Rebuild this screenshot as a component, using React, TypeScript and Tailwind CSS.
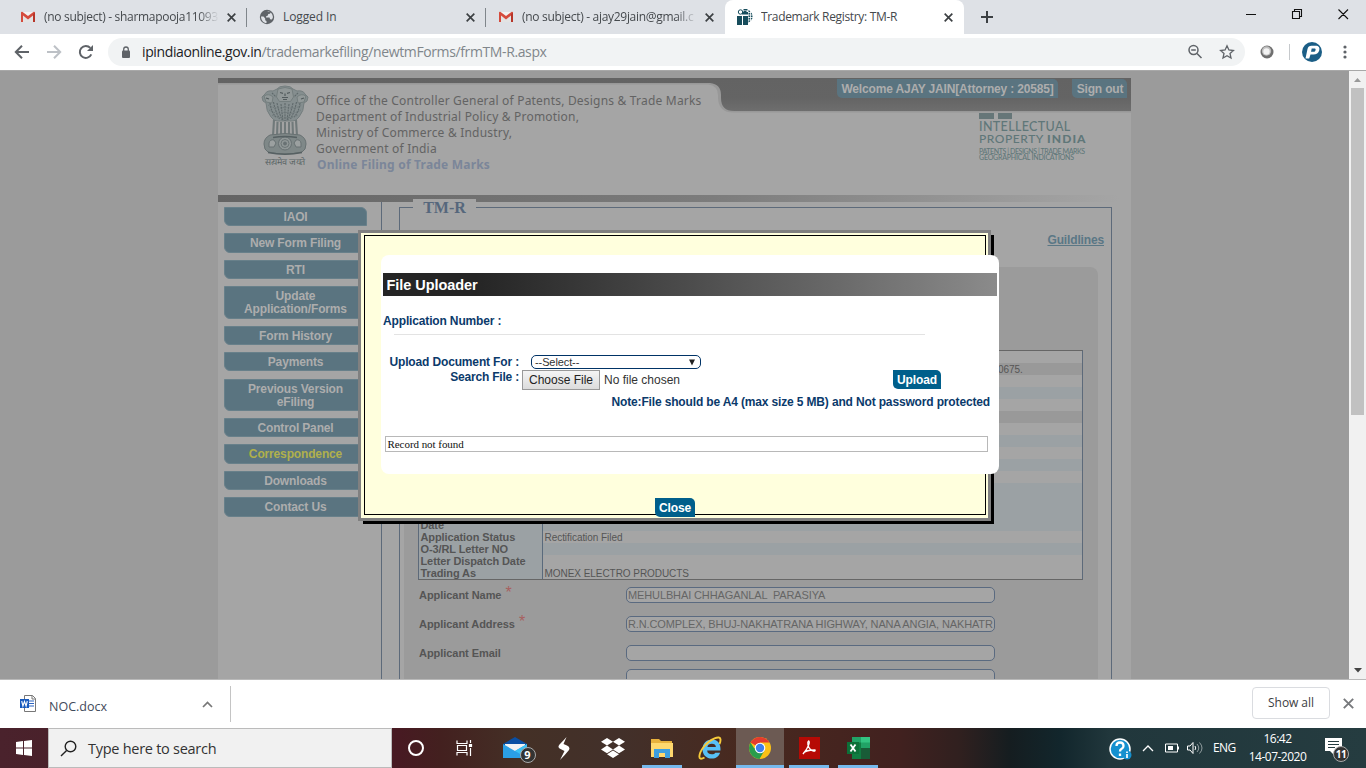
import React from "react";

const ui = "font-['Open_Sans','Noto_Sans',sans-serif]";
const arial = "font-['Liberation_Sans',Arial,sans-serif]";

function GmailIcon() {
  return (
    <svg width="16" height="16" viewBox="0 0 16 16">
      <path d="M1 3h14v10H1z" fill="#f2f2f2" />
      <path d="M3 13V6l5 4 5-4v7z" fill="#e3e3e3" />
      <path d="M1 3.4V13h2V6.500l5 4 5-4V13h2V3.400c0-.8-1-1-1.600-.5L8 7 2.600 2.900C2 2.400 1 2.600 1 3.400z" fill="#d54b3d" />
      <path d="M13 6.500V13h2V3.400L13 5z" fill="#b63529" />
    </svg>
  );
}

function GlobeIcon() {
  return (
    <svg width="16" height="16" viewBox="0 0 16 16">
      <circle cx="8" cy="8" r="7.200" fill="#5f6368" />
      <path d="M8.500 2.200c1.200 0 2.200.5 3 1.200l-.5 1.300-1.800.3-.3 1.500-1.700.7-.2 1.300h3.500l.6 1.800 1.700.2c.8-.9 1.100-1.700 1.100-2.700-.3-3.200-2.200-5.200-5.400-5.400zM2 7.400l2.500.2 1.700 2v1.600l1.300.8v2C4.500 13.700 2.200 11.400 2 7.400z" fill="#dee1e6" />
    </svg>
  );
}

function RegistryIcon() {
  return (
    <svg width="16" height="16" viewBox="0 0 16 16">
      <path d="M0 7h5v9H0zM6 7h5v9H6z" fill="#174d5c" />
      <circle cx="3.500" cy="3" r="2.200" fill="none" stroke="#174d5c" strokeWidth="1" />
      <path d="M6.500 0h4v1.500h-4zM5 3h6v2.500H5zM6.500 2h3v1h-3z" fill="#174d5c" />
      <path d="M11.500 1q3.500 1.500 4 6v2q-1 3.500-4 4.500z" fill="#174d5c" />
      <path d="M11 3.500h5M11 6h5M11 8.500h5M11 11h5M13.500 1v12" stroke="#fff" strokeWidth=".8" />
    </svg>
  );
}

function X({ s = 8, c = "#3c4043", w = 1.8 }: { s?: number; c?: string; w?: number }) {
  return (
    <svg width={s} height={s} viewBox="0 0 8 8">
      <path d="M.6.6l6.800 6.800M7.400.6L.6 7.400" stroke={c} strokeWidth={w} />
    </svg>
  );
}

function Tab({ icon, title, tracking, active, fade }: { icon: React.ReactNode; title: string; tracking: string; active?: boolean; fade?: boolean }) {
  return (
    <div className={"relative flex h-[34px] w-[239px] shrink-0 items-center pl-[12px] " + (active ? "rounded-t-[8px] bg-white" : "")}>
      {icon}
      <span
        className={
          "ml-[8px] w-[175px] shrink-0 overflow-hidden whitespace-nowrap text-[12px] leading-[20px] text-[#45494d] " +
          tracking +
          (fade ? " [mask-image:linear-gradient(to_right,black_88%,transparent)]" : "")
        }
      >
        {title}
      </span>
      <span className="ml-[8px] flex">
        <X s={9} w={1.500} />
      </span>
    </div>
  );
}

function TabStrip() {
  return (
    <div className="flex h-[34px] items-start bg-[#dee1e6]">
      <div className="w-[8px] shrink-0" />
      <Tab icon={<GmailIcon />} title="(no subject) - sharmapooja11093" tracking="tracking-[-0.3px]" fade />
      <div className="mt-[8px] -ml-px h-[19px] w-px shrink-0 bg-[#80868b]" />
      <Tab icon={<GlobeIcon />} title="Logged In" tracking="tracking-[-0.1px]" />
      <div className="mt-[8px] -ml-px h-[19px] w-px shrink-0 bg-[#80868b]" />
      <Tab icon={<GmailIcon />} title="(no subject) - ajay29jain@gmail.c" tracking="tracking-[-0.3px]" fade />
      <Tab icon={<RegistryIcon />} title="Trademark Registry: TM-R" tracking="tracking-[-0.33px]" active />
      <svg className="ml-[17px] mt-[11px]" width="12" height="12" viewBox="0 0 12 12">
        <path d="M6 0v12M0 6h12" stroke="#3c4043" strokeWidth="2" />
      </svg>
      <svg className="ml-auto mr-[17px] mt-[8px]" width="104" height="12" viewBox="0 0 104 12">
        <path d="M1 6.500h10M47.500 3.500h7v7h-7zM49.500 3.500v-2h7v7h-2M93.500 1.500l9.500 9.500M103 1.500L93.500 11" fill="none" stroke="#111" strokeWidth="1.100" />
      </svg>
    </div>
  );
}

function Toolbar() {
  return (
    <div className="flex h-[37px] items-center border-b border-[#a8a8a8] bg-white">
      <svg className="ml-[14px] shrink-0" width="82" height="16" viewBox="0 0 82 16" fill="none" strokeWidth="2">
        <path d="M15 8H2M8 1.800L1.800 8 8 14.200" stroke="#5f6368" />
        <path d="M33 8h13M40 1.800L46.200 8 40 14.200" stroke="#bdc1c6" />
        <path d="M77.300 10.400a6 6 0 1 1-1-6.500" stroke="#5f6368" />
        <path d="M79 1v6h-6z" fill="#5f6368" />
      </svg>
      <div className="ml-[12px] flex h-[28px] w-[1137px] shrink-0 items-center rounded-full bg-[#f1f3f4] pl-[13px]">
        <svg width="10" height="13" viewBox="0 0 10 13">
          <rect x="1" y="4.500" width="8" height="7.500" rx="1" fill="#5f6368" />
          <path d="M2.700 5V3.300a2.300 2.300 0 0 1 4.600 0V5" fill="none" stroke="#5f6368" strokeWidth="1.300" />
        </svg>
        <span className="ml-[11px] whitespace-nowrap text-[14px] leading-[20px] tracking-[-0.38px] text-[#202124]">
          ipindiaonline.gov.in<span className="text-[#80868b]">/trademarkefiling/newtmForms/frmTM-R.aspx</span>
        </span>
        <svg className="ml-auto mr-[9px]" width="48" height="16" viewBox="0 0 48 16" fill="none" stroke="#5f6368" strokeWidth="1.500">
          <circle cx="5.500" cy="6" r="4.500" />
          <path d="M9 9.500l4.500 4.500M3.200 6h4.600" />
          <path d="M39 1.800l1.900 4.200 4.500.5-3.400 3 1 4.500-4-2.300-4 2.300 1-4.500-3.400-3 4.500-.5z" strokeWidth="1.300" />
        </svg>
      </div>
      <svg className="ml-[15px]" width="14" height="14" viewBox="0 0 14 14">
        <circle cx="7" cy="7" r="6.500" fill="#6f6f6f" />
        <circle cx="6.500" cy="6" r="4.700" fill="#bdbdbd" />
        <circle cx="6.500" cy="6.500" r="3.200" fill="#f3f3f3" />
      </svg>
      <div className="ml-[15px] h-[16px] w-px bg-[#c6c9cc]" />
      <svg className="ml-[12px]" width="20" height="20" viewBox="0 0 20 20">
        <circle cx="10" cy="10" r="10" fill="#1b5e86" />
        <path d="M3.500 16.500L5.500 7q.8-3.300 4-3.300h4c3.300 0 4.500 1.800 3.700 4.700-.8 2.800-2.700 4.100-5.800 4.100H8.500l-1.300 4z" fill="#fff" />
        <path d="M9.700 6.600h2.600c1.200 0 1.500.6 1.200 1.600-.3 1-.9 1.500-2 1.500H9z" fill="#1b5e86" />
      </svg>
      <svg className="ml-[21px]" width="4" height="14" viewBox="0 0 4 14" fill="#5f6368">
        <circle cx="2" cy="2" r="1.600" />
        <circle cx="2" cy="7" r="1.600" />
        <circle cx="2" cy="12" r="1.600" />
      </svg>
    </div>
  );
}

function Emblem() {
  return (
    <svg width="48" height="84" viewBox="0 0 48 84" fill="none" stroke="#687173">
      <path d="M16 4q2-3 8-3t8 3l4 2q6-1 8 3l3 3-1 4-3 2q0 8-5 14-3 4-6 4H16q-3 0-6-4-5-6-5-14l-3-2-1-4 3-3q2-4 8-3z" fill="#858e8f" stroke="#757e7f" />
      <path d="M17 4q7-3 14 0l1.500 8-3 4.500h-11l-3-4.500z" fill="#909797" stroke="#6f7879" strokeWidth=".8" />
      <path d="M3 11q5-3 9 1l-1 6-6-1zM45 11q-5-3-9 1l1 6 6-1z" fill="#929999" stroke="#6f7879" strokeWidth=".8" />
      <path d="M19 7.500l3 .8M29 7.500l-3 .8M24 8.500v2.500M21 12.500h6M22 14.500h4M5 13l3 1M43 13l-3 1" stroke="#525b5d" strokeWidth="1.200" />
      <path d="M11 8l4 4M37 8l-4 4M9 18q1 9 6 14M12.500 17q2 10 6 17M16 18q2 9 5 17M20 19l2 17M24 18v18M28 19l-2 17M32 18q-2 9-5 17M35.500 17q-2 10-6 17M39 18q-1 9-6 14" stroke="#5f696b" strokeWidth="1.100" strokeDasharray="2 .8" />
      <path d="M7 20q8 5 17 2 9 3 17-2M8 25q8 5 16 2 8 3 16-2M11 30q7 4 13 2 6 2 13-2" stroke="#6a7375" strokeWidth=".8" strokeDasharray="1.500 1" />
      <path d="M13 35l-1 16M16.500 37l-.5 14M20 37v15M24 37v15M28 37v15M31.500 37l.5 14M35 35l1 16" stroke="#70797a" strokeWidth="2.100" />
      <path d="M9 50q15-3 30 0 6 3 6 9 0 6-4 8-17 4-34 0-4-2-4-8 0-6 6-9z" fill="#7f8888" stroke="#687172" />
      <circle cx="24" cy="58.500" r="6.500" fill="#909797" />
      <circle cx="24" cy="58.500" r="4" strokeWidth=".9" />
      <circle cx="24" cy="58.500" r="1.500" fill="#687173" />
      <path d="M8 58q1-4 5-3l2 3-2 4H8zM40 58q-1-4-5-3l-2 3 2 4h5z" fill="#9ba0a0" />
      <path d="M7 67.500q17 3.500 34 0M12 52.500q12-2 24 0" stroke="#566062" strokeWidth="1.500" />
    </svg>
  );
}

function Header() {
  return (
    <div className="relative h-[124px] shrink-0">
      <svg className="absolute left-0 top-0" width="913" height="125" viewBox="0 0 913 125">
        <defs>
          <linearGradient id="strip" x1="0" x2="1" y1="0" y2="0">
            <stop offset="0" stopColor="#646464" />
            <stop offset=".55" stopColor="#7c7c7c" />
            <stop offset=".95" stopColor="#a1a1a1" />
            <stop offset="1" stopColor="#a5a5a5" />
          </linearGradient>
          <linearGradient id="bar" x1="0" x2="0" y1="0" y2="1">
            <stop offset="0" stopColor="#636363" />
            <stop offset=".6" stopColor="#646464" />
            <stop offset="1" stopColor="#6e6e6e" />
          </linearGradient>
        </defs>
        <path d="M0 0h913v34.500H515q-14 0-15-14v-3q0-10-10-11H0z" fill="#989898" />
        <path d="M0 0h913v33H516q-13 0-13-13v-3q0-11-11-12H0z" fill="url(#bar)" />
        <rect x="0" y="117" width="902" height="7" fill="url(#strip)" />
      </svg>
      <div className="relative flex">
        <div className="ml-[43px] mt-[7px] h-[84px] w-[48px]">
          <Emblem />
          <div className="-mt-[14px] whitespace-nowrap text-center text-[9px] font-medium leading-[14px] tracking-[-0.25px] text-[#5c6567]">सत्यमेव जयते</div>
        </div>
        <div className="ml-[7px] mt-[14px] whitespace-nowrap pt-[0.600px] font-['Noto_Sans','Open_Sans',sans-serif] text-[12px] leading-[16.200px] tracking-[0.2px] text-[#636363]">
          <div>Office of the Controller General of Patents, Designs &amp; Trade Marks</div>
          <div>Department of Industrial Policy &amp; Promotion,</div>
          <div>Ministry of Commerce &amp; Industry,</div>
          <div>Government of India</div>
          <div className="pl-px font-bold text-[#7b8699]">Online Filing of Trade Marks</div>
        </div>
        <div className="ml-auto flex flex-col">
          <div className={"flex justify-end pr-[4px] pt-px text-[12px] font-bold leading-[20px] tracking-[-0.17px] text-[#adadad] " + arial}>
            <div className="h-[19px] w-[221px] whitespace-nowrap rounded-bl-[5px] rounded-tr-[5px] bg-[#5a7480] text-center">Welcome AJAY JAIN[Attorney : 20585]</div>
            <div className="ml-[14px] h-[19px] w-[55px] whitespace-nowrap rounded-bl-[5px] rounded-tr-[5px] bg-[#5a7480] pl-px text-center">Sign out</div>
          </div>
          <div className="ml-[142px] mt-[15px] whitespace-nowrap font-['Lato',sans-serif] font-medium text-[#5f7779]">
            <div className="flex gap-[4px]">
              <div className="h-[6px] w-[15px] bg-[#667678]" />
              <div className="h-[6px] w-[14px] bg-[#667678]" />
            </div>
            <div className="mt-px text-[12.500px] leading-[13px] tracking-[0.35px]">INTELLECTUAL</div>
            <div className="text-[12px] leading-[12.500px] tracking-[0.55px]">
              PROPERTY <span className="font-black tracking-[1.1px]">INDIA</span>
            </div>
            <div className="mt-[2px] text-[7px] leading-[6px] tracking-[-0.400px]">PATENTS | DESIGNS | TRADE MARKS</div>
            <div className="text-[7px] leading-[6.500px] tracking-[-0.200px]">GEOGRAPHICAL INDICATIONS</div>
          </div>
        </div>
      </div>
    </div>
  );
}

const menu: [string, string][] = [
  ["IAOI", "h-[19px]"],
  ["New Form Filing", "h-[20px] mt-[7px]"],
  ["RTI", "h-[19px] mt-[7px]"],
  ["Update\nApplication/Forms", "h-[33px] mt-[7px]"],
  ["Form History", "h-[19px] mt-[7px]"],
  ["Payments", "h-[19px] mt-[7px]"],
  ["Previous Version\neFiling", "h-[32px] mt-[8px]"],
  ["Control Panel", "h-[19px] mt-[7px]"],
  ["Correspondence", "h-[20px] mt-[7px] text-[#b0b04c]"],
  ["Downloads", "h-[19px] mt-[7px]"],
  ["Contact Us", "h-[20px] mt-[7px]"],
];

function Sidebar() {
  return (
    <div className="w-[164px] shrink-0 border-r border-[#5d6a7a] pl-[6px] pt-[5px]">
      {menu.map(([label, cls]) => (
        <div
          key={label}
          className={
            "flex w-[143px] items-center justify-center whitespace-pre rounded-bl-[6px] rounded-tr-[6px] border border-[#68808a] bg-[#5a7480] pt-px text-center text-[12px] font-bold leading-[13px] text-[#adadad] tracking-[-0.15px] " +
            cls
          }
        >
          {label}
        </div>
      ))}
    </div>
  );
}

const rows: [string, string, string][] = [
  ["", "", "bg-[#a5a5a5]"],
  ["", "0675.", "bg-[#999999]"],
  ["", "", "bg-[#a5a5a5]"],
  ["", "", "bg-[#9ba1a4]"],
  ["", "", "bg-[#a5a5a5]"],
  ["", "", "bg-[#999999]"],
  ["", "", "bg-[#a5a5a5]"],
  ["", "", "bg-[#9ba1a4]"],
  ["", "", "bg-[#a5a5a5]"],
  ["", "", "bg-[#9ba1a4]"],
  ["", "", "bg-[#a5a5a5]"],
  ["", "", "bg-[#9ba1a4]"],
  ["", "", "bg-[#9ba1a4]"],
  ["", "", "bg-[#9ba1a4]"],
  ["Date", "", "bg-[#9ba1a4]"],
  ["Application Status", "Rectification Filed", "bg-[#a5a5a5]"],
  ["O-3/RL Letter NO", "", "bg-[#9ba1a4]"],
  ["Letter Dispatch Date", "", "bg-[#a5a5a5]"],
  ["Trading As", "MONEX ELECTRO PRODUCTS", "bg-[#a5a5a5]"],
];

function Field({ label, value, req, cls }: { label: string; value: string; req?: boolean; cls: string }) {
  return (
    <div className={"flex h-[16px] items-center " + cls}>
      <div className="w-[207px] shrink-0 whitespace-nowrap text-[11px] font-bold leading-[16px] tracking-[-0.05px] text-[#555]">
        {label}
        {req && <span className="relative -top-[1px] ml-[4px] text-[16px] font-normal leading-[10px] text-[#a8605f]">*</span>}
      </div>
      <div className="h-[16px] w-[369px] overflow-hidden whitespace-pre rounded-[5px] border border-[#5a6a80] bg-[#a5a5a5] pl-px text-[11px] leading-[15px] tracking-[-0.12px] text-[#656565]">{value}</div>
    </div>
  );
}

function Form() {
  return (
    <div className="ml-[17px] w-[713px]">
      <div className="mt-[5px] h-[600px] border border-[#5d6a7a] px-[4px]">
        <div className="relative -mt-[9px] ml-[9px] h-[20px] w-[63px] bg-[#a5a5a5] text-center font-['Liberation_Serif',serif] text-[16px] font-bold leading-[18px] text-[#56677c]">TM-R</div>
        <div className="mt-[13px] pr-[3px] text-right text-[12px] font-bold leading-[16px] tracking-[-0.15px] text-[#5a7785] underline">Guildlines</div>
        <div className="mt-[19px] h-[480px] w-[694px] rounded-[8px] bg-[#9b9b9b] pl-[14px] pt-[83px]">
          <div className="w-[665px] border border-[#5d6a7a] border-b-[#666] border-t-[#666]">
            {rows.map(([a, b, c], i) => (
              <div key={i} className="flex h-[12px] text-[#555]">
                <div className="w-[124px] shrink-0 whitespace-nowrap border-r border-[#5a6a7c] bg-[#9ba1a4] pl-[1.500px] text-[11px] font-bold leading-[13px] tracking-[-0.1px]">{a}</div>
                <div className={"grow whitespace-nowrap text-[10px] leading-[13px] tracking-[-0.05px] " + c + (b === "0675." ? " pl-[455px]" : " pl-[1.500px]")}>{b}</div>
              </div>
            ))}
          </div>
          <Field label="Applicant Name" value="MEHULBHAI CHHAGANLAL  PARASIYA" req cls="mt-[7px] pl-px" />
          <Field label="Applicant Address" value="R.N.COMPLEX, BHUJ-NAKHATRANA HIGHWAY, NANA ANGIA, NAKHATR" req cls="mt-[13px] pl-px" />
          <Field label="Applicant Email" value="" cls="mt-[13px] pl-px" />
          <Field label="" value="" cls="mt-[8px] pl-px" />
        </div>
      </div>
    </div>
  );
}

function Dialog() {
  return (
    <div className="absolute left-[358px] top-[159px] h-[291px] w-[633px] border-[3px] border-[#808080] bg-[#ffffdd] pl-[3px] pr-[2px] pt-[2px] shadow-[4px_4px_0_-1px_#000]">
      <div className="flex h-[280px] w-[622px] flex-col items-start border border-black pl-[16px] pt-[19px]">
        <div className="h-[219px] w-[618px] shrink-0 rounded-[8px] bg-white pl-[2px] pt-[18px] text-[12px] font-bold text-[#0b3a6b]">
          <div className="h-[23px] w-[614px] bg-linear-to-r from-[#252525] from-15% to-[#8b8b8b] pl-[3.500px] text-[14.500px] leading-[24px] tracking-[-0.05px] text-white">File Uploader</div>
          <div className="mt-[17px] h-[16px] leading-[16px] tracking-[-0.15px]">Application Number :</div>
          <div className="ml-[11px] mt-[5px] h-px w-[531px] bg-[#e3e3e3]" />
          <div className="mt-[20px] flex h-[14px] items-center">
            <div className="w-[136px] whitespace-nowrap text-right tracking-[-0.15px]">Upload Document For :</div>
            <div className="ml-[12px] flex h-[14px] w-[170px] items-center justify-between rounded-[5px] border border-[#003366] bg-white pl-[3px] pr-[5px] text-[11px] font-normal tracking-[-0.1px] text-[#333]">
              <span>--Select--</span>
              <svg width="6" height="7" viewBox="0 0 6 7">
                <path d="M0 .5h6L3 6.500z" fill="#222" />
              </svg>
            </div>
          </div>
          <div className="flex h-[22px] items-start">
            <div className="w-[136px] whitespace-nowrap text-right leading-[16px] tracking-[-0.2px]">Search File :</div>
            <div className="ml-[3px] mt-px flex h-[20px] w-[78px] items-center justify-center whitespace-nowrap border border-[#999] bg-linear-to-b from-[#f4f4f4] to-[#dcdcdc] font-normal text-[#222]">Choose File</div>
            <div className="ml-[4px] mt-px whitespace-nowrap font-normal leading-[20px] text-[#333]">No file chosen</div>
            <div className="ml-[213px] mt-px h-[19px] w-[48px] rounded-bl-[5px] rounded-tr-[5px] bg-[#005f8b] text-center leading-[20px] tracking-[-0.1px] text-white">Upload</div>
          </div>
          <div className="mt-[3px] w-[607px] text-right leading-[16px] tracking-[-0.15px]">Note:File should be A4 (max size 5 MB) and Not password protected</div>
          <div className="ml-[2px] mt-[26px] h-[16px] w-[603px] border border-[#b8b8b8] pl-[1.500px] font-['Liberation_Serif',serif] text-[11px] font-normal leading-[15px] tracking-[-0.05px] text-[#111]">Record not found</div>
        </div>
        <div className="ml-[274px] mt-[24px] h-[19px] w-[40px] shrink-0 rounded-bl-[5px] rounded-tr-[5px] bg-[#005f8b] text-center text-[12px] font-bold leading-[20px] tracking-[-0.1px] text-white">Close</div>
      </div>
    </div>
  );
}

function Page() {
  return (
    <div className={"relative flex h-[608px] overflow-hidden bg-[#9b9b9b] " + arial}>
      <div className="ml-[218px] flex w-[913px] flex-col bg-[#a5a5a5]">
        <div className="h-[7px] shrink-0 bg-[#9b9b9b]" />
        <Header />
        <div className="flex grow">
          <Sidebar />
          <Form />
        </div>
      </div>
      <div className="ml-auto flex w-[17px] flex-col items-center justify-between bg-[#f1f1f1]">
        <div className="flex flex-col items-center">
          <svg className="mt-[7px]" width="7" height="5" viewBox="0 0 7 5">
            <path d="M0 4l3.500-4L7 4z" fill="#999" />
          </svg>
          <div className="mt-[5px] h-[327px] w-[13px] bg-[#c1c1c1]" />
        </div>
        <svg className="mb-[6px]" width="8" height="5" viewBox="0 0 8 5">
          <path d="M0 0h8L4 4.500z" fill="#444" />
        </svg>
      </div>
      <Dialog />
    </div>
  );
}

function Downloads() {
  return (
    <div className="flex h-[49px] border-t border-[#b9b9b9] bg-white text-[#3c4043]">
      <svg className="ml-[20px] mt-[15px]" width="16" height="17" viewBox="0 0 16 17">
        <path d="M4.500.5h8l3 3v13h-11z" fill="#fff" stroke="#777" />
        <path d="M12 .5v3.500h3.500" fill="none" stroke="#777" />
        <path d="M9 6h5M9 8.500h5M9 11h5" stroke="#2b62c0" strokeWidth="1.200" />
        <path d="M0 4h9v9H0z" fill="#185abd" />
        <path d="M1.700 6l1.200 5 1.600-4.500L6.100 11l1.200-5" fill="none" stroke="#fff" strokeWidth="1.100" />
      </svg>
      <span className="ml-[13px] mt-[17px] w-[60px] whitespace-nowrap text-[12.500px] leading-[20px] tracking-[0px] text-[#3f4a5a]">NOC.docx</span>
      <svg className="ml-[93px] mt-[21px]" width="11" height="7" viewBox="0 0 11 7">
        <path d="M1 6l4.500-4.500L10 6" fill="none" stroke="#777" strokeWidth="1.700" />
      </svg>
      <div className="ml-[17px] mt-[6px] h-[36px] w-px bg-[#c4c4c4]" />
      <div className="ml-auto mt-[7px] flex h-[32px] w-[78px] items-center justify-center rounded-[4px] border border-[#dadce0] text-[12px] tracking-[-0.05px]">Show all</div>
      <div className="ml-[13px] mr-[12px] mt-[18px]">
        <X s={11} c="#77797c" w={1.400} />
      </div>
    </div>
  );
}

function Slot({ w, on, hot, children }: { w: string; on?: boolean; hot?: boolean; children: React.ReactNode }) {
  return (
    <div className={"flex h-[40px] shrink-0 flex-col items-center " + w + (hot ? " bg-[#6c5a53]" : "")}>
      <div className="flex h-[37px] items-center pt-[3px]">{children}</div>
      {on && <div className="h-[3px] w-full bg-[#76b9ed]" />}
    </div>
  );
}

function Taskbar() {
  return (
    <div className="flex h-[40px] bg-[linear-gradient(90deg,#4a222c_0,#471a22_400px,#43201f_440px,#443026_520px,#42302a_620px,#48291f_740px,#45241f_840px,#41211f_900px,#30201f_960px,#151d20_1010px,#12262c_1060px,#21373c_1110px,#253c40_1366px)] text-white">
      <div className="flex w-[48px] shrink-0 items-center justify-center">
        <svg width="16" height="16" viewBox="0 0 16 16" fill="#fff">
          <path d="M0 2l7-1v6.500H0zM8 .9L16 0v7.500H8zM0 8.500h7V15l-7-1zM8 8.500h8V16l-8-1z" />
        </svg>
      </div>
      <div className="flex w-[344px] shrink-0 items-center border border-[#bbb] bg-[#f1f1f1]">
        <svg className="ml-[11px]" width="17" height="17" viewBox="0 0 17 17" fill="none" stroke="#222" strokeWidth="1.400">
          <circle cx="10.500" cy="6.500" r="5.300" />
          <path d="M6.600 10.500L1 16" />
        </svg>
        <span className="ml-[11px] whitespace-nowrap pt-px text-[14.500px] leading-[20px] tracking-[-0.27px] text-[#333]">Type here to search</span>
      </div>
      <Slot w="w-[48px]">
        <div className="h-[16px] w-[16px] rounded-full border-2 border-white" />
      </Slot>
      <Slot w="w-[48px]">
        <svg width="17" height="16" viewBox="0 0 17 16" fill="none" stroke="#fff" strokeWidth="1.200">
          <path d="M1 .5v3h10v-3M1 15.500v-3h10v3M1.500 5.500h9v5h-9zM14.500 0v3M14.500 8v8" />
          <path d="M13.500 4.500h2v2h-2z" fill="#fff" />
        </svg>
      </Slot>
      <Slot w="w-[56px]">
        <div className="relative h-[24px] w-[27px]">
          <svg width="24" height="24" viewBox="0 0 24 24">
            <path d="M0 8l12-7 12 7v14H0z" fill="#0a4fa3" />
            <path d="M2 8h20v10H2z" fill="#f3f3f3" />
            <path d="M0 8l12 7 12-7v14H0z" fill="#2a9fe6" />
            <path d="M24 8v14L12 15z" fill="#3cc2f5" />
          </svg>
          <div className="absolute -right-[6px] top-[11px] flex h-[16px] w-[16px] items-center justify-center rounded-full border border-[#aaa] bg-[#333] text-[11px] font-bold">9</div>
        </div>
      </Slot>
      <Slot w="w-[40px]">
        <svg width="12" height="23" viewBox="0 0 12 23" fill="#fff">
          <path d="M8.500 0Q6 3 1.500 7.500q-2.500 3 1 4.500l4 2L2 23q5-5 9-10 1.500-3-2-4.500L5.500 7z" />
        </svg>
      </Slot>
      <Slot w="w-[58px]">
        <svg width="24" height="20" viewBox="0 0 24 20" fill="#fff">
          <path d="M6 0l6 3.800-6 3.800L0 3.800zM18 0l6 3.800-6 3.800-6-3.800zM6 7.600l6 3.800-6 3.800-6-3.800zM18 7.600l6 3.800-6 3.800-6-3.800zM12 12.400l6 3.800L12 20l-6-3.800z" />
        </svg>
      </Slot>
      <Slot w="w-[40px]" on>
        <svg width="22" height="20" viewBox="0 0 22 20">
          <path d="M0 1h8l2 2h11v16H0z" fill="#e8b13c" />
          <path d="M0 5h22v14H0z" fill="#ffd86e" />
          <path d="M3 11h16v9h-5v-5H8v5H3z" fill="#3e9fe0" />
        </svg>
      </Slot>
      <div className="w-[8px]" />
      <Slot w="w-[40px]">
        <svg width="24" height="24" viewBox="0 0 24 24">
          <path d="M22.500 14.500H9.200c0 2.500 1.900 3.800 4.600 3.800 1.700 0 2.800-.6 3.500-1.600h4.800C20.800 20.300 17.900 22.500 14 22.500c-5.700 0-9.500-3.600-9.500-9.300S8.300 3.500 14 3.500c5.900 0 8.800 4.200 8.500 11zM9.400 11h8.500c-.2-2-1.600-3.200-4-3.200-2.600 0-4.100 1.200-4.500 3.200z" fill="#58c0f5" />
          <path d="M6.500 21.500C-1 26 .500 17.500 6 10.500 11.500 3.500 23-2 22.500 4q0 2-1 4" stroke="#f8cb3a" strokeWidth="1.900" fill="none" />
        </svg>
      </Slot>
      <div className="w-[6px]" />
      <Slot w="w-[48px]" on hot>
        <svg width="22" height="22" viewBox="0 0 22 22">
          <circle cx="11" cy="11" r="11" fill="#fbc116" />
          <path d="M11 11L1.500 5.500A11 11 0 0 1 20.500 5.500H11z" fill="#e33b2e" />
          <path d="M1.500 5.500A11 11 0 0 0 10.500 22l5-8.500L11 11H5z" fill="#2a9d4c" />
          <circle cx="11" cy="11" r="5.300" fill="#fff" />
          <circle cx="11" cy="11" r="4.200" fill="#3f7fec" />
        </svg>
      </Slot>
      <div className="w-[5px]" />
      <Slot w="w-[40px]" on>
        <svg width="21" height="22" viewBox="0 0 21 22">
          <path d="M0 0h21v22H0z" fill="#b60a05" />
          <path d="M4 17c1-3 5-4 12-4 1 2-3 1-5-1s-3-7-1.500-8c2 0 0 7-5.500 13z" fill="none" stroke="#fff" strokeWidth="1.300" />
        </svg>
      </Slot>
      <div className="w-[9px]" />
      <Slot w="w-[40px]" on>
        <svg width="23" height="22" viewBox="0 0 23 22">
          <path d="M5 0h18v22H5z" fill="#21a366" />
          <path d="M5 5.500h9V22H5z" fill="#107c41" />
          <path d="M14 0h9v5.500h-9z" fill="#33c481" />
          <path d="M14 11h9v11h-9z" fill="#185c37" />
          <path d="M0 5h12v12H0z" fill="#0c7038" />
          <path d="M3.500 7.500l5 7M8.500 7.500l-5 7" stroke="#fff" strokeWidth="1.800" />
        </svg>
      </Slot>
      <div className="ml-auto flex h-[40px] items-center">
        <svg className="mt-[1px]" width="23" height="22" viewBox="0 0 23 22">
          <circle cx="11" cy="11" r="10" fill="#1590cf" stroke="#fff" strokeWidth="1.500" />
          <path d="M7.500 8q0-3.500 3.500-3.500T14.500 8q0 1.800-1.800 2.800T11 13.500M11 15.500v2.500" fill="none" stroke="#fff" strokeWidth="2.300" />
          <circle cx="18" cy="17" r="4.500" fill="#1590cf" />
          <path d="M18 16v4M18 13.500v1.500" stroke="#fff" strokeWidth="1.700" />
        </svg>
        <svg className="ml-[10px]" width="12" height="8" viewBox="0 0 12 8">
          <path d="M1 7l5-5 5 5" fill="none" stroke="#fff" strokeWidth="1.300" />
        </svg>
        <svg className="ml-[11px]" width="15" height="10" viewBox="0 0 15 10">
          <path d="M.5 1h12v8H.5zM13.500 3.500v3" fill="none" stroke="#fff" />
          <path d="M3 3h5v4H3z" fill="#fff" />
        </svg>
        <svg className="ml-[7px]" width="17" height="14" viewBox="0 0 17 14" fill="none" stroke="#fff">
          <path d="M.5 5h2.500l3-3.500v11L3 9H.5zM8 5q1.500 2 0 4" />
          <path d="M10 3q3.500 4 0 8M12.500 1.500q5 5.500 0 11" opacity=".5" />
        </svg>
        <span className="ml-[9px] w-[24px] whitespace-nowrap text-[12px] tracking-[-0.6px]">ENG</span>
        <div className="ml-[11px] w-[59px] whitespace-nowrap text-center text-[12px] leading-[18px] tracking-[-0.5px]">
          <div>16:42</div>
          <div>14-07-2020</div>
        </div>
        <div className="relative ml-[18px] mr-[16px] h-[20px] w-[25px]">
          <svg width="17" height="18" viewBox="0 0 17 18">
            <path d="M0 0h17v13H9v4l-4-4H0z" fill="#fff" />
            <path d="M3 3.500h11M3 6.500h11M3 9.500h7" stroke="#253c40" />
          </svg>
          <div className="absolute left-[8px] top-[8px] flex h-[16px] w-[16px] items-center justify-center rounded-full border border-[#aaa] bg-[#333] text-[10px] font-bold tracking-[-0.5px]">11</div>
        </div>
      </div>
    </div>
  );
}

export default function App() {
  return (
    <div className={"h-[768px] w-[1366px] overflow-hidden " + ui}>
      <TabStrip />
      <Toolbar />
      <Page />
      <Downloads />
      <Taskbar />
    </div>
  );
}
